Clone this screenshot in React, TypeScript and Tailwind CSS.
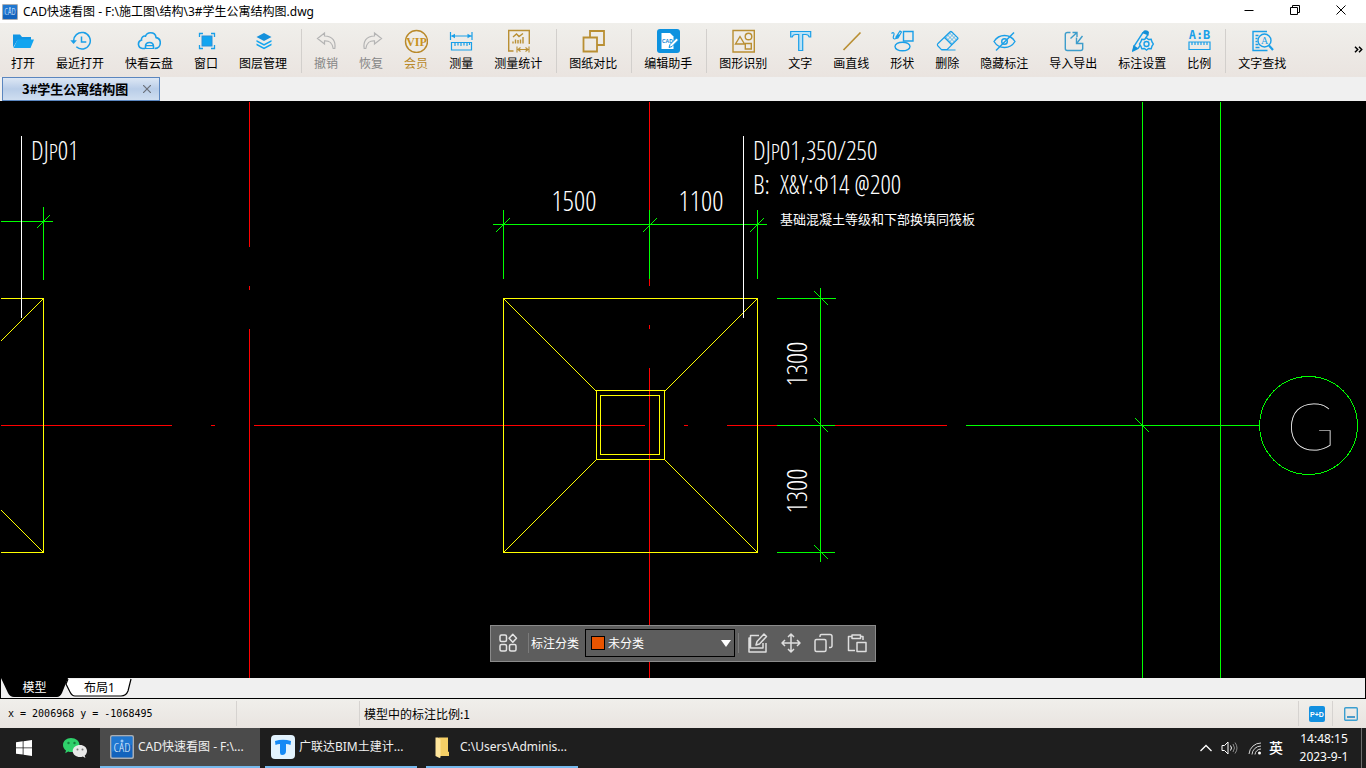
import type { ReactNode } from "react";

const UI = "font-['Noto_Sans_CJK_SC',sans-serif]";
const LATIN = "font-['Noto_Sans','Noto_Sans_CJK_SC',sans-serif]";
const CAD_FONT = "'Open Sans Condensed Light','Roboto Condensed Light','Roboto Condensed','Liberation Sans Narrow','Noto Sans CJK SC',sans-serif";
const AXIS_FONT = "'Lato Hairline','Lato Thin','Roboto Thin',Lato,Roboto,sans-serif";

const BLUE = "#1a9fe8";
const GOLD = "#b98f33";

function Icon({ children, stroke = BLUE, width = 1.4 }: { children: ReactNode; stroke?: string; width?: number }) {
  return (
    <svg className="h-6 w-6 shrink-0" viewBox="0 0 24 24" fill="none" stroke={stroke} strokeWidth={width} aria-hidden="true">
      {children}
    </svg>
  );
}

const icons: Record<string, ReactNode> = {
  open: (
    <Icon>
      <path d="M2 18.500V5.500h7l2 2.500h9v3H6.500z" fill="#1195e4" stroke="none" />
      <path d="M2.500 19 6.500 10.500H23L19.500 19z" fill="#12a5f0" stroke="none" />
    </Icon>
  ),
  recent: (
    <Icon width={1.500}>
      <path d="M5.700 12.500a8.300 8.300 0 1 1 2.600 5.300" />
      <path d="M13.500 7.500V13h4.800" />
      <path d="M2.300 11.300h6.600L5.600 15z" fill={BLUE} stroke="none" />
    </Icon>
  ),
  cloud: (
    <Icon width={1.600}>
      <path d="M8 19.500H5.500a4.300 4.300 0 0 1-1-8.400c-.4-2.500 1.700-4.500 4-4C9.500 4.600 11.500 3.800 13.500 3.800c3 0 5.200 2 5.600 4.800 2.500.4 4.200 2.500 4.200 5.200 0 3.200-2.300 5.700-5.600 5.700" />
      <path d="M8.500 20v-2.500c0-2.500 1.500-4 4-4s4 1.500 4 4V20" />
      <path d="M8.500 16.700h8M8 19.500h9" strokeWidth="1.200" />
    </Icon>
  ),
  fit: (
    <Icon width={1.800}>
      <rect x="8" y="7" width="10" height="10" fill="#12a5f0" stroke="#2b8fd8" strokeWidth="1" />
      <path d="M5.500 8V4.500H9M17 4.500h3.500V8M20.500 16v3.500H17M9 19.500H5.500V16" strokeWidth="1.300" />
    </Icon>
  ),
  layers: (
    <Icon>
      <path d="m13 4 7.500 4L13 12 5.500 8z" fill="#1591dc" stroke="none" />
      <path d="m5.500 11 7.500 4 7.500-4v1.800l-7.500 4-7.500-4z" fill="#12a5f0" stroke="none" />
      <path d="m5.500 14.500 7.500 4 7.500-4v1.800l-7.500 4-7.500-4z" fill="#12a5f0" stroke="none" />
    </Icon>
  ),
  undo: (
    <Icon stroke="#b4b4b4" width={1.200}>
      <path d="M10.500 4 3.500 9.500l7 5.500v-3.200c4.500-.2 7.500 1 8.700 7.700h1.600c1.200-7-2-12.300-10.300-12.500z" />
    </Icon>
  ),
  redo: (
    <Icon stroke="#b4b4b4" width={1.200}>
      <path d="m15.500 4 7 5.500-7 5.500v-3.200c-4.500-.2-7.500 1-8.700 7.700H5.200C4 12.500 7.200 7.200 15.500 7z" />
    </Icon>
  ),
  vip: (
    <Icon stroke="#b98a2c">
      <circle cx="12.500" cy="12.500" r="11" />
      <text x="12.500" y="16.500" textAnchor="middle" fontFamily="Liberation Serif, serif" fontWeight="700" fontSize="12" fill="#c8921e" stroke="none">VIP</text>
    </Icon>
  ),
  measure: (
    <Icon width={1.200}>
      <path d="M1.500 3v8M23 3v8M2.500 7h20" />
      <path d="M2 7l4-2.200v4.400zM22.500 7l-4-2.200v4.400z" fill={BLUE} stroke="none" />
      <path d="M2.500 13.500h20v7.500h-20zM6 14v3M9 14v2.500M12 14v3M15 14v2.500M18 14v3M20.500 14v2" />
    </Icon>
  ),
  stats: (
    <Icon stroke={GOLD}>
      <path d="M7.500 22H2.700V1.500h20.600V15" />
      <path d="M7 8l3.500-3 2.500 2.500L17 4.500M7 14.500v-2M9.500 14.500v-4M12 14.500V11M14.500 14.500v-4M17 14.500V8" />
      <path d="M11 17.500v6M23 17.500v6M12 20.500h10M14.500 18.500l-2.500 2 2.500 2M19.500 18.500l2.500 2-2.500 2" strokeWidth="1.100" />
    </Icon>
  ),
  compare: (
    <Icon stroke={GOLD} width={1.800}>
      <path d="M9 8.500V2h14v14h-7" />
      <path d="M2.500 8.500H16v14H2.500z" />
    </Icon>
  ),
  assistant: (
    <Icon>
      <rect x="1" width="23" height="24" rx="3" fill="#0d92df" stroke="none" />
      <path d="M5.500 4H14l3.500 3.500V20h-12z" fill="#fff" stroke="none" />
      <text x="6" y="14" fontFamily="Liberation Sans, sans-serif" fontWeight="700" fontSize="5" fill="#0d85d4" stroke="none">CAD</text>
      <path d="m13 18.500 1-3L20.500 9l2 2-6.500 6.500z" fill="#fff" stroke="#0d92df" strokeWidth="1" />
    </Icon>
  ),
  recognise: (
    <Icon stroke={GOLD}>
      <path d="M2 1.500h21.300V23H2z" />
      <path d="M9 7.500 13.500 15h-9z" />
      <circle cx="17.500" cy="7.500" r="3.300" />
      <path d="M14.300 14.500h6v5.500h-6z" />
    </Icon>
  ),
  text: (
    <Icon width={1.200}>
      <path d="M2.700 2.500h20V8h-1.500c-.5-2-1.500-2.500-3.500-2.500h-3v16h-4v-16h-3C5.700 5.500 4.700 6 4.200 8H2.700z" fill="#b9e2f7" />
    </Icon>
  ),
  line: (
    <Icon stroke={GOLD} width={1.700}>
      <path d="M4.500 21 21.500 3.500" />
    </Icon>
  ),
  shapes: (
    <Icon>
      <path d="M1.500 4.500c1.800-1.700 3.200-.5 2.300 1.800S3 10 4.500 10s3-2 4.500-4.500M6 8l4-6 1.500 1L8 9l-2 .5z" strokeWidth="1.200" />
      <path d="M13.500 2.500h9.500v9.500h-9.500z" />
      <ellipse cx="12.500" cy="17.500" rx="7.500" ry="4.300" />
    </Icon>
  ),
  eraser: (
    <Icon width={1.200}>
      <path d="M3 14.500 15.200 2.700a1 1 0 0 1 1.400 0l6 6a1 1 0 0 1 0 1.400L12 20.700H6.500L3 17a1.600 1.600 0 0 1 0-2.500zM9.500 8.500 17 16M6.500 21h14" />
      <path d="m10.500 8 7 7M12.500 6l7 7M14.500 4l7 7M10.500 9l6-6M12.500 11l6-6M14.500 13l6-6M16.500 15l6-6" strokeWidth=".6" />
    </Icon>
  ),
  hide: (
    <Icon>
      <path d="M2 12.500C4.500 8.500 8 6.500 12.500 6.500s8 2 10.500 6c-2.500 4-6 6-10.500 6s-8-2-10.500-6z" />
      <circle cx="12.500" cy="12.500" r="2.800" />
      <path d="M4 21.500 22 3.500" />
    </Icon>
  ),
  transfer: (
    <Icon stroke="#3d9dcb">
      <path d="M9.500 3.500H6.300a2 2 0 0 0-2 2v14a2 2 0 0 0 2 2h13.400a2 2 0 0 0 2-2v-5h-6.200V8.500" />
      <path d="M9.500 9.500 16 3.500M11.500 3.500H16v4.500M21.500 7 16 14" />
    </Icon>
  ),
  settings: (
    <Icon>
      <path d="M13 3.500 4.500 16.500 3 22l5-2.500 2.500-3.500M18 5.500 15 10" />
      <path d="m12 4 2-2.500q3.500-1 5 1.500l-.5 3.500zM2 22.500 3.500 16l5 3.500z" fill="#138fd6" stroke="none" />
      <path d="m16.500 8.800 2 1.700 2.700-.2.800 2.600 1.300 2.100-1.300 2.100-.8 2.600-2.700-.2-2 1.700-2-1.700-2.700.2-1-2.600L9.500 15l1.300-2.100 1-2.600 2.700.2z" fill="#eeecea" />
      <circle cx="16.500" cy="15" r="2.500" />
    </Icon>
  ),
  scale: (
    <Icon width={1.200}>
      <text x="12.500" y="9.500" textAnchor="middle" fontFamily="DejaVu Sans Mono, monospace" fontWeight="700" fontSize="12" fill={BLUE} stroke="none">A:B</text>
      <path d="M2 13h21v7.500H2zM5 13v3M8 13v3M11 13v3M14 13v3M17 13v3M20 13v3" />
    </Icon>
  ),
  find: (
    <Icon>
      <path d="M17 2.500H3v19h14.500M5.500 6.500h3M5.500 9.500h2M5.500 12.500h2M5.500 15.500h3M5.500 18.500h4" />
      <circle cx="14.500" cy="11.500" r="6.500" />
      <path d="m19 16.500 4 4.500" strokeWidth="2.200" />
      <text x="14.500" y="15" textAnchor="middle" fontFamily="Liberation Serif, serif" fontSize="10" fill={BLUE} stroke="none">A</text>
    </Icon>
  ),
};

type Tool = { id: string; label: string; tone?: string } | null;

const tools: Tool[] = [
  { id: "open", label: "打开" },
  { id: "recent", label: "最近打开" },
  { id: "cloud", label: "快看云盘" },
  { id: "fit", label: "窗口" },
  { id: "layers", label: "图层管理" },
  null,
  { id: "undo", label: "撤销", tone: "text-[#868686]" },
  { id: "redo", label: "恢复", tone: "text-[#868686]" },
  { id: "vip", label: "会员", tone: "text-[#b9892a]" },
  { id: "measure", label: "测量" },
  { id: "stats", label: "测量统计" },
  null,
  { id: "compare", label: "图纸对比" },
  null,
  { id: "assistant", label: "编辑助手" },
  null,
  { id: "recognise", label: "图形识别" },
  { id: "text", label: "文字" },
  { id: "line", label: "画直线" },
  { id: "shapes", label: "形状" },
  { id: "eraser", label: "删除" },
  { id: "hide", label: "隐藏标注" },
  { id: "transfer", label: "导入导出" },
  { id: "settings", label: "标注设置" },
  { id: "scale", label: "比例" },
  null,
  { id: "find", label: "文字查找" },
];

function CadLogo({ className }: { className: string }) {
  return (
    <svg className={className} viewBox="0 0 24 24" aria-hidden="true">
      <rect width="24" height="24" rx="2" fill="#a9adb2" />
      <rect x="1.500" y="1.500" width="21" height="21" rx="1" fill="#1263bd" />
      <path d="M1.500 1.500h21v8L1.500 17z" fill="#2a86dc" opacity=".6" />
      <text x="12" y="17" textAnchor="middle" fontFamily="Open Sans Condensed Light, Liberation Sans, sans-serif" fontSize="13" fill="#e4f2ff">CAD</text>
      <circle cx="12" cy="6" r="1.500" fill="#9cc9f4" />
    </svg>
  );
}

function TitleBar() {
  return (
    <header className="flex h-[23px] shrink-0 items-center bg-white pr-0.5 pl-0.5">
      <CadLogo className="h-4 w-4 shrink-0" />
      <h1 className={`ml-[5px] flex-1 truncate text-xs text-black ${LATIN}`}>CAD快速看图 - F:\施工图\结构\3#学生公寓结构图.dwg</h1>
      <div className="flex self-start">
        {[
          { label: "最小化", d: "M1 6h9" },
          { label: "还原", d: "M1 3h7v7H1zM3 3V1h7v7H8" },
          { label: "关闭", d: "M1 1l9 9M10 1 1 10" },
        ].map((b) => (
          <button key={b.label} type="button" aria-label={b.label} className="flex h-5 w-[46px] items-center justify-center">
            <svg className="h-3 w-3" viewBox="0 0 12 12" fill="none" stroke="#000" aria-hidden="true">
              <path d={b.d} transform="translate(.5 .5)" />
            </svg>
          </button>
        ))}
      </div>
    </header>
  );
}

function Toolbar() {
  return (
    <nav className={`flex h-[54px] shrink-0 items-start gap-px overflow-hidden bg-linear-to-b from-[#f0efeb] to-[#eae4e0] pt-1.5 pl-px ${UI}`}>
      {tools.map((t, i) =>
        t ? (
          <button key={t.id} type="button" className={`flex shrink-0 flex-col items-center px-2.5 ${t.tone ?? "text-black"}`}>
            {icons[t.id]}
            <span className="mt-0.5 text-xs/4 whitespace-nowrap">{t.label}</span>
          </button>
        ) : (
          <span key={i} className="mr-px ml-[3px] h-11 w-px shrink-0 bg-[#d2cfcc]" />
        ),
      )}
      <button type="button" aria-label="更多" className="mt-2 mr-0.5 ml-auto flex h-6 w-3 items-center justify-center">
        <svg className="h-[7px] w-[9px]" viewBox="0 0 9 7" fill="none" stroke="#000" strokeWidth="1.500" aria-hidden="true">
          <path d="m1 .8 2.700 2.700L1 6.200M5 .8l2.700 2.700L5 6.200" />
        </svg>
      </button>
    </nav>
  );
}

function FileTabs() {
  return (
    <div className="flex h-6 shrink-0 bg-[#f0f0f0] pl-0.5">
      <div className="flex w-[158px] items-center border border-[#5b86bf] bg-linear-to-b from-[#dde7f4] via-[#b9cde8] to-[#cfdef0] pl-[19px]">
        <button type="button" className={`text-[13px] font-bold whitespace-nowrap text-black ${UI}`}>3#学生公寓结构图</button>
        <button type="button" aria-label="关闭标签" className="ml-auto flex h-5 w-6 items-center justify-center">
          <svg className="h-2 w-2" viewBox="0 0 8 8" stroke="#6b7079" strokeWidth="1.200" aria-hidden="true">
            <path d="m0 0 8 8M8 0 0 8" />
          </svg>
        </button>
      </div>
    </div>
  );
}

function Drawing() {
  return (
    <svg className="absolute inset-0 h-full w-full" role="img" aria-label="3#学生公寓结构图" fill="none" strokeWidth="1">
      <g transform="translate(.5 .5)" shapeRendering="crispEdges" strokeLinecap="square">
        <path
          stroke="#ff0000"
          d="M249 1V145M249 185V188M249 228V577M649 1V109M649 178V184M649 224V227M649 267V577M1 324H171M211 324H214M254 324H644M684 324H687M727 324H777M835 324H946"
        />
        <path
          stroke="#ffff00"
          d="M1 197H43V451H1M43 197 1 239M1 409 43 451M503 197H757V451H503ZM596 289H664V358H596ZM600 294H659V353H600ZM503 197 595 289M757 197 665 289M503 451 596 358M757 451 664 358"
        />
        <path
          stroke="#00ff00"
          d="M1 120H52M43 106V178M37 126 49 114M493 123H766M503 109V177M649 109V177M757 109V177M496 130 509 117M643 130 656 117M750 130 763 117"
        />
        <path
          stroke="#00ff00"
          d="M820 187V460M777 197H835M777 324H834M777 451H834M814 190 827 203M814 317 827 330M814 444 827 457M966 324H1259M1142 1V577M1220 1V577M1135 317 1148 330"
        />
        <circle cx="1308" cy="324" r="49" stroke="#00ff00" />
        <path stroke="#fff" d="M21 35V216M743 35V216" />
      </g>
      <g fill="#fff" stroke="none" fontFamily={CAD_FONT} fontWeight="300" fontSize="26">
        <text x="31" y="59">DJ<tspan fontSize="22">P</tspan>01</text>
        <text x="753" y="59">DJ<tspan fontSize="22">P</tspan>01,350/250</text>
        <text x="753" y="93" xmlSpace="preserve">B:  X&amp;Y:Φ14 @200</text>
        <text x="780" y="123" fontSize="13" fontWeight="400">基础混凝土等级和下部换填同筏板</text>
        <g fontSize="28" textAnchor="middle">
          <text x="574" y="110">1500</text>
          <text x="701" y="110">1100</text>
          <text transform="translate(807 263) rotate(-90)">1300</text>
          <text transform="translate(807 390) rotate(-90)">1300</text>
        </g>
        <text x="1311" y="349" fontSize="66" textAnchor="middle" fontWeight="100" fontFamily={AXIS_FONT}>G</text>
      </g>
    </svg>
  );
}

const markActions = [
  { label: "编辑", d: "M12 3.500H3.500v12.500H16V11M9 13l1-3.500L17 2l2.500 2.500-7 7.500zM3.500 6H2v14h17v-9" },
  { label: "移动", d: "M11 2v18M2 11h18M8 5l3-3 3 3M8 17l3 3 3-3M5 8l-3 3 3 3M17 8l3 3-3 3" },
  { label: "复制", d: "M3.500 7.500h8a1.500 1.500 0 0 1 1.500 1.500v9a1.500 1.500 0 0 1-1.500 1.500h-8A1.500 1.500 0 0 1 2 18V9a1.500 1.500 0 0 1 1.500-1.500zM7 5V4a1.500 1.500 0 0 1 1.500-1.500h8.500A2 2 0 0 1 19 4.500V14a1.500 1.500 0 0 1-1.500 1.500H16" },
  { label: "粘贴", d: "M6 4.500H2.500v14H9M14.500 4.500H17V8M6 3h8.500v3.500H6zM11 10.500h9v9h-9z" },
];

function MarkBar() {
  return (
    <div className="pointer-events-none absolute inset-x-0 bottom-4 flex justify-center">
      <div className={`pointer-events-auto flex h-[37px] items-center border border-[#8b8b8b] bg-[#5d5d5d] px-[7px] pb-px text-xs text-white ${UI}`}>
        <button type="button" aria-label="分类管理" className="flex w-5 justify-center">
          <svg className="h-5 w-5" viewBox="0 0 20 20" fill="none" stroke="#e4e4e4" strokeWidth="1.500" aria-hidden="true">
            <rect x="2" y="2" width="6.500" height="6.500" rx="1.500" />
            <rect x="2" y="11.500" width="6.500" height="6.500" rx="1.500" />
            <rect x="11.500" y="11.500" width="6.500" height="6.500" rx="1.500" />
            <path d="m14.800 1.200 3.700 4-3.700 4-3.700-4z" strokeLinejoin="round" />
          </svg>
        </button>
        <span className="ml-2.5 h-5 w-px bg-[#7b7b7b]" />
        <label htmlFor="mark-class" className="ml-0.5">标注分类</label>
        <div className="relative ml-1.5">
          <select id="mark-class" className="block h-7 w-[150px] appearance-none border border-black bg-[#5d5d5d] pl-[22px] text-xs text-white">
            <option>未分类</option>
          </select>
          <span className="pointer-events-none absolute top-[7px] left-1.5 h-3.5 w-3.5 border border-black bg-[#e85400]" />
          <svg className="pointer-events-none absolute top-[11px] right-1 h-[7px] w-2.5" viewBox="0 0 10 7" aria-hidden="true">
            <path d="M0 0h10L5 7z" fill="#fff" />
          </svg>
        </div>
        <span className="ml-[3px] h-5 w-px bg-[#7b7b7b]" />
        <div className="ml-2 flex gap-[11px]">
          {markActions.map((a) => (
            <button key={a.label} type="button" aria-label={a.label}>
              <svg className="h-[22px] w-[22px]" viewBox="0 0 22 22" fill="none" stroke="#dedede" strokeWidth="1.500" strokeLinejoin="round" aria-hidden="true">
                <path d={a.d} />
              </svg>
            </button>
          ))}
        </div>
      </div>
    </div>
  );
}

function LayoutTabs() {
  return (
    <div className={`flex h-[21px] shrink-0 border-x border-b border-black bg-[#f0f0f0] text-xs ${LATIN}`}>
      <button type="button" className="relative flex h-[19px] w-[67px] items-center justify-center text-white">
        <svg className="absolute inset-0 h-full w-full" viewBox="0 0 67 19" aria-hidden="true">
          <path d="M0 0h67l-6 15q-2 4-5 4H13q-4 0-6-4z" fill="#000" />
        </svg>
        <span className="relative">模型</span>
      </button>
      <button type="button" className="relative flex h-[19px] w-[63px] items-center justify-center text-black">
        <svg className="absolute inset-0 h-full w-full overflow-visible" viewBox="0 0 63 19" aria-hidden="true">
          <path d="M0 1-2 6 2 14q2 4 5 4h46q5 0 7-5L63 1" fill="#fff" stroke="#000" strokeWidth="1.200" />
        </svg>
        <span className="relative">布局1</span>
      </button>
    </div>
  );
}

function StatusBar() {
  return (
    <footer className="flex h-[29px] shrink-0 items-center bg-linear-to-b from-[#f0efeb] to-[#e9e4e0] text-black">
      <span className="w-[236px] pl-2 font-['DejaVu_Sans_Mono',monospace] text-[10px] whitespace-nowrap">x = 2006968 y = -1068495</span>
      <span className="h-[25px] w-px bg-[#d6d3d0]" />
      <span className="w-[122px]" />
      <span className="h-[25px] w-px bg-[#d6d3d0]" />
      <span className={`ml-1 flex-1 text-xs ${UI}`}>模型中的标注比例:1</span>
      <span className="h-[25px] w-px bg-[#d6d3d0]" />
      <button type="button" aria-label="P+D" className="flex w-[33px] justify-center">
        <svg className="ml-0.5 h-4 w-4" viewBox="0 0 16 16" aria-hidden="true">
          <rect width="16" height="16" rx="2" fill="#1290e0" />
          <text x="8" y="10.500" textAnchor="middle" fontFamily="Liberation Sans, sans-serif" fontWeight="700" fontSize="7" fill="#fff">P+D</text>
        </svg>
      </button>
      <span className="h-[25px] w-px bg-[#d6d3d0]" />
      <button type="button" aria-label="面板" className="mr-2 ml-[11px]">
        <svg className="h-3.5 w-3.5" viewBox="0 0 14 14" fill="none" aria-hidden="true">
          <rect x=".7" y=".7" width="12.600" height="12.600" rx="1" stroke="#3b9fd0" strokeWidth="1.400" />
          <path d="M3 10h8" stroke="#2488c4" strokeWidth="1.600" />
        </svg>
      </button>
    </footer>
  );
}

function Task({ icon, label, active }: { icon: ReactNode; label: string; active?: boolean }) {
  return (
    <button
      type="button"
      className={`flex h-10 items-center gap-1 border-b-2 border-[#76b9ed] text-xs whitespace-nowrap text-[#f0f0f0] ${active ? "w-40 bg-[#4b4b4b] pl-2.5" : "w-[152px] pl-1.5"}`}
    >
      {icon}
      <span>{label}</span>
    </button>
  );
}

function Taskbar() {
  return (
    <div className={`flex h-10 shrink-0 items-center bg-[#1e1e1e] text-white ${LATIN}`}>
      <button type="button" aria-label="开始" className="flex h-10 w-12 items-center justify-center">
        <svg className="h-4 w-4" viewBox="0 0 16 16" fill="#fff" aria-hidden="true">
          <path d="M0 2.200 6.700 1.300v6.200H0zM7.500 1.200 16 0v7.500H7.500zM0 8.300h6.700v6.300L0 13.700zM7.500 8.300H16V16l-8.500-1.200z" />
        </svg>
      </button>
      <button type="button" aria-label="微信" className="flex h-10 w-[52px] items-center justify-center">
        <svg className="ml-0.5 h-6 w-6" viewBox="0 0 24 24" aria-hidden="true">
          <path d="M8 2c-4.500 0-8 3-8 7 0 2.300 1.200 4.200 3 5.500l-.8 2.700 3-1.600c1 .4 1.900.5 2.800.5 4.800 0 8.500-3 8.500-7.100S12.800 2 8 2z" fill="#2fd16b" />
          <circle cx="5.500" cy="7" r="1.200" fill="#16803e" />
          <circle cx="11.500" cy="7" r="1.200" fill="#16803e" />
          <path d="M17 9c-4 0-7.300 2.600-7.300 6s3.300 6 7.300 6c1 0 2-.1 2.900-.5l2.500 1.500-.7-2.400c1.500-1.100 2.300-2.700 2.300-4.600 0-3.400-3-6-7-6z" fill="#e9e9e9" />
          <circle cx="14.500" cy="13.500" r="1" fill="#777" />
          <circle cx="19.500" cy="13.500" r="1" fill="#777" />
        </svg>
      </button>
      <div className="flex">
        <Task active icon={<CadLogo className="h-6 w-6 shrink-0" />} label="CAD快速看图 - F:\..." />
        <span className="w-[5px]" />
        <Task
          icon={
            <svg className="h-6 w-6 shrink-0" viewBox="0 0 24 24" aria-hidden="true">
              <rect width="24" height="24" rx="4" fill="#e3f3fe" />
              <path d="M4 6q8-2.500 16 0l-.5 4q-2-1-4.500-1v7q0 4-4 4-2 0-2-2.500V9Q6.500 9 4.500 10z" fill="#168af5" />
            </svg>
          }
          label="广联达BIM土建计..."
        />
        <span className="w-[9px]" />
        <Task
          icon={
            <svg className="h-6 w-6 shrink-0" viewBox="0 0 24 24" aria-hidden="true">
              <path d="M6.500 2.500H16v14l1 .5v4H6.500z" fill="#f5cf66" />
              <path d="M3.500 2.500h2.500l2.500 2V22.500l-1 .5-4-2z" fill="#ffe69c" />
            </svg>
          }
          label="C:\Users\Adminis..."
        />
      </div>
      <div className="ml-auto flex items-center">
        <button type="button" aria-label="显示隐藏的图标" className="flex h-10 w-3 items-center">
          <svg className="h-2 w-3" viewBox="0 0 12 8" fill="none" stroke="#fff" strokeWidth="1.300" aria-hidden="true">
            <path d="m.5 7 5.500-5.500L11.500 7" />
          </svg>
        </button>
        <button type="button" aria-label="音量" className="ml-[9px] flex h-10 w-[18px] items-center">
          <svg className="h-4 w-[18px]" viewBox="0 0 18 16" fill="none" stroke="#fff" aria-hidden="true">
            <path d="M1 5.500h2.500L7 2v12l-3.500-3.500H1z" />
            <path d="M9.500 5.500q2 2.500 0 5" />
            <path d="M12 4q3 4 0 8M14 2.500q4 5.500 0 11" stroke="#8b8b8b" />
          </svg>
        </button>
        <button type="button" aria-label="网络" className="ml-[9px] flex h-10 w-3.5 items-center">
          <svg className="h-3.5 w-3.5" viewBox="0 0 14 14" fill="none" stroke="#d8d8d8" aria-hidden="true">
            <path d="M1 13A12 12 0 0 1 13 2M4 13.500A9 9 0 0 1 13 5M7 13.500A6 6 0 0 1 13 8" />
            <circle cx="11.500" cy="12" r="1.500" fill="#fff" stroke="none" />
          </svg>
        </button>
        <button type="button" className="ml-[7px] text-sm font-medium">英</button>
        <time className="ml-[11px] flex w-[60px] flex-col items-center text-xs/[18px] whitespace-nowrap" dateTime="2023-09-01T14:48:15">
          <span>14:48:15</span>
          <span>2023-9-1</span>
        </time>
        <span className="mr-1 ml-[7px] h-10 w-px bg-[#6e6e6e]" />
      </div>
    </div>
  );
}

export default function App() {
  return (
    <div className="flex h-screen flex-col overflow-hidden bg-[#f0f0f0]">
      <TitleBar />
      <Toolbar />
      <FileTabs />
      <main className="relative min-h-0 flex-1 overflow-hidden bg-black">
        <Drawing />
        <MarkBar />
      </main>
      <LayoutTabs />
      <StatusBar />
      <Taskbar />
    </div>
  );
}
